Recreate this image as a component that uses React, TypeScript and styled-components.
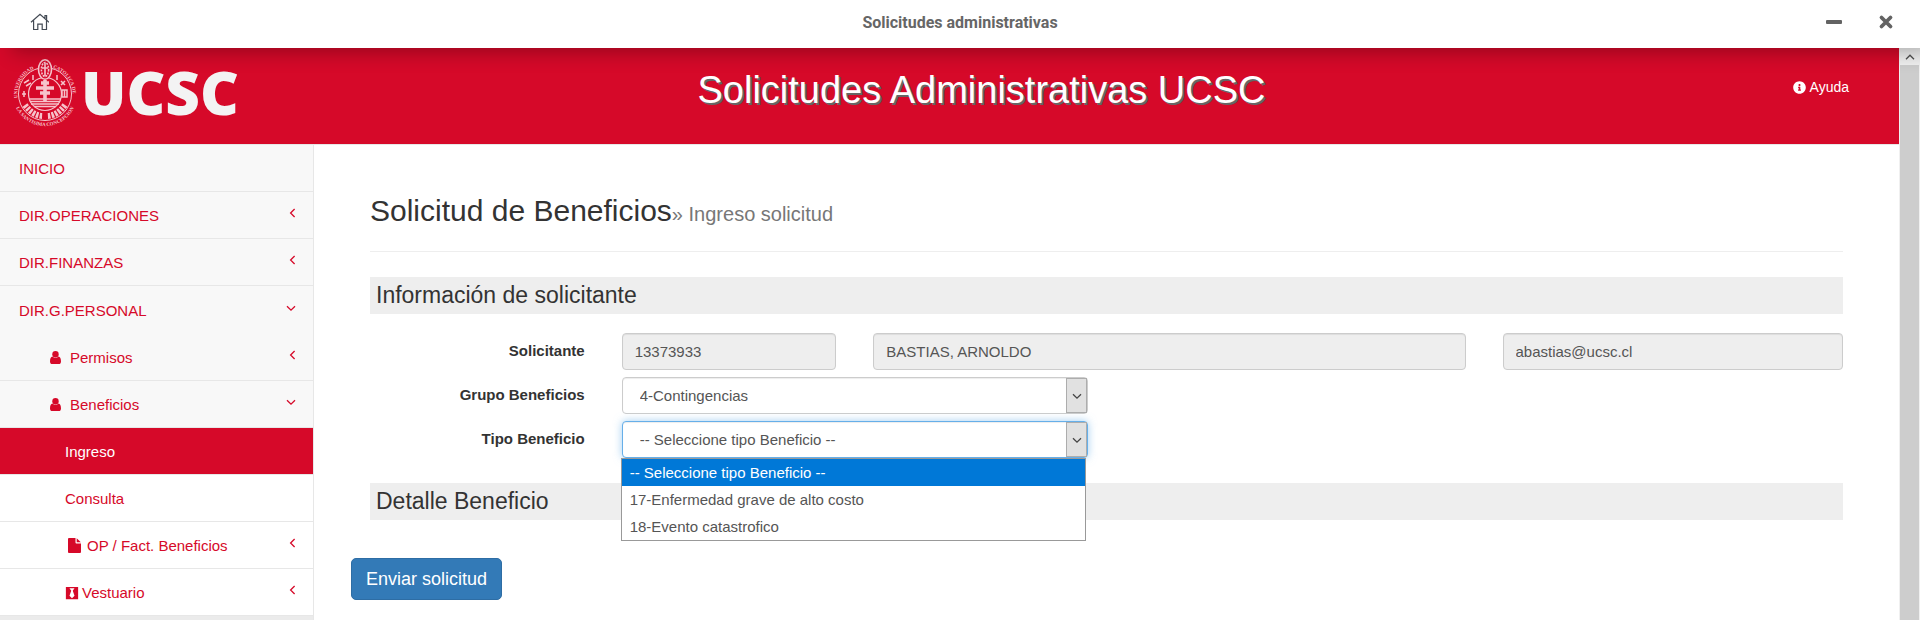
import React from "react";
import styled, { createGlobalStyle, css } from "styled-components";
import { FaBlackTie, FaInfoCircle } from "react-icons/fa";

const brand = "#d60929";
const line = "#e7e7e7";

const GlobalStyle = createGlobalStyle`
  *, *::before, *::after { box-sizing: border-box; }
  body {
    margin: 0;
    background: #fff;
    color: #333;
    font: 15px/21px "Liberation Sans", Arial, sans-serif;
  }
  h1, h2, ul { margin: 0; padding: 0; font-weight: 400; }
  ul { list-style: none; }
  a { color: inherit; text-decoration: none; }
  button, input, select { font: inherit; }
`;

const Window = styled.div`
  display: flex;
  flex-direction: column;
  height: 100vh;
  overflow: hidden;
`;

const TitleBar = styled.div`
  position: relative;
  z-index: 2;
  flex: none;
  display: grid;
  grid-template-columns: 1fr auto 1fr;
  align-items: center;
  height: 48px;
  padding: 0 24px 4px;
  background: #fff;
  box-shadow: 12px 4px 20px rgba(0, 0, 0, 0.3);
`;

const WindowTitle = styled.div`
  padding-top: 2px;
  color: #666;
  font: 700 16px/20px Roboto, sans-serif;
`;

const WindowButtons = styled.div`
  display: flex;
  justify-content: flex-end;
  gap: 32px;
`;

const IconButton = styled.button`
  display: flex;
  justify-self: start;
  padding: 0;
  border: 0;
  background: none;
  color: #636363;
`;

const Viewport = styled.div`
  flex: 1;
  display: flex;
  min-height: 0;
`;

const Page = styled.div`
  flex: 1;
  min-width: 0;
  display: flex;
  flex-direction: column;
  overflow: hidden;
`;

const Header = styled.header`
  flex: none;
  display: grid;
  grid-template-columns: 316px 1fr 252px;
  height: 97px;
  background: ${brand};
  border-bottom: 1px solid ${line};
  color: #fff;
`;

const Logo = styled.a`
  display: block;
  padding-left: 12px;
`;

const HeaderTitle = styled.div`
  padding-top: 20px;
  text-align: center;
  font-size: 38px;
  line-height: 44px;
  white-space: nowrap;
  text-shadow: 2px 2px 0 #666;
`;

const HelpLink = styled.a`
  display: flex;
  align-items: center;
  justify-content: flex-end;
  gap: 4px;
  height: 21px;
  margin: 29px 50px 0 0;
  font-size: 14px;
`;

const Body = styled.div`
  flex: 1;
  display: flex;
`;

const Sidebar = styled.nav`
  flex: none;
  align-self: stretch;
  width: 314px;
  border-right: 1px solid ${line};
`;

const Menu = styled.ul`
  border-bottom: 4px solid #ebebeb;
`;

type Level = 1 | 2 | 3;
const indents = { 1: 19, 2: 50, 3: 65 };

const MenuLink = styled.a<{ $level: Level; $active?: boolean; $heading?: boolean }>`
  display: flex;
  align-items: center;
  height: 47px;
  padding: 1px 17px 0 ${(p) => indents[p.$level]}px;
  border-bottom: 1px solid ${line};
  background: ${(p) => (p.$level === 3 ? "#fff" : "#f8f8f8")};
  color: ${brand};
  ${(p) => p.$heading && css`
    height: 48px;
    border-bottom: 0;
  `}
  ${(p) => p.$active && css`
    background: ${brand};
    color: #fff;
  `}
`;

const MenuIcon = styled.span<{ $gap: number }>`
  display: flex;
  margin-right: ${(p) => p.$gap}px;
`;

const MenuArrow = styled.span`
  display: flex;
  margin: 0 0 6px auto;
`;

const Main = styled.main`
  flex: 1;
  min-width: 0;
  padding: 49px 37px 0;
`;

const Content = styled.div`
  padding: 0 19px;
`;

const PageTitle = styled.h1`
  padding-bottom: 24px;
  margin-bottom: 25px;
  border-bottom: 1px solid #eee;
  font-size: 30px;
  line-height: 33px;

  small {
    color: #777;
    font-size: 20px;
    line-height: 20px;
  }
`;

const SectionTitle = styled.h2`
  padding: 0 6px;
  background: #eee;
  font-size: 23px;
  line-height: 37px;
`;

const FormGrid = styled.div`
  display: grid;
  grid-template-columns: repeat(12, minmax(0, 1fr));
  column-gap: 37px;
  row-gap: 7px;
  margin: 19px 0 25px;
`;

const Label = styled.label`
  grid-column: 1 / span 2;
  padding-top: 7px;
  text-align: right;
  font-weight: 700;
`;

const field = css`
  width: 100%;
  height: 37px;
  border: 1px solid #ccc;
  border-radius: 4px;
  box-shadow: inset 0 1px 1px rgba(0, 0, 0, 0.075);
  color: #555;
  outline: 0;
`;

const TextField = styled.input<{ $span: number }>`
  ${field}
  grid-column: span ${(p) => p.$span};
  padding: 0 12px;
  background: #eee;
`;

const SelectBox = styled.div`
  position: relative;
  grid-column: span 4;
`;

const Select = styled.select<{ $focused?: boolean }>`
  ${field}
  display: block;
  appearance: none;
  padding: 0 30px 0 17px;
  background: #fff;
  ${(p) => p.$focused && css`
    border-color: #66afe9;
    box-shadow: inset 0 1px 1px rgba(0, 0, 0, 0.075), 0 0 8px rgba(102, 175, 233, 0.6);
  `}
`;

const SelectArrow = styled.span`
  position: absolute;
  top: 1px;
  right: 1px;
  bottom: 1px;
  display: flex;
  align-items: center;
  justify-content: center;
  width: 21px;
  border: 1px solid #adadad;
  background: #e1e1e1;
  pointer-events: none;
`;

const Options = styled.ul`
  position: absolute;
  z-index: 1;
  top: 100%;
  left: -1px;
  right: 2px;
  border: 1px solid #999;
  background: #fff;
  color: #555;
`;

const Option = styled.li<{ $selected?: boolean }>`
  padding: 0 8px;
  line-height: 27px;
  ${(p) => p.$selected && css`
    background: #0078d7;
    color: #fff;
  `}
`;

const SubmitButton = styled.button`
  margin-top: 38px;
  height: 42px;
  padding: 0 14px;
  border: 1px solid #2e6da4;
  border-radius: 5px;
  background: #337ab7;
  color: #fff;
  font-size: 18px;
  line-height: 38px;
`;

const Scrollbar = styled.div`
  flex: none;
  width: 21px;
  padding: 0 1px;
  display: flex;
  flex-direction: column;
  background: #f0f0f0;
`;

const ScrollUp = styled.button`
  display: flex;
  align-items: center;
  justify-content: center;
  height: 17px;
  padding: 0;
  border: 0;
  background: #f0f0f0;
`;

const ScrollThumb = styled.div`
  flex: 1;
  background: #cdcdcd;
`;

const HomeIcon = () => (
  <svg width="25" height="18" viewBox="-6 0 25 18" fill="none" stroke="#434a54" strokeWidth="1.2">
    <path d="M1 9.3 10 1.3l9 8M3.6 7.4v9.1h4.2v-5.4h4.4v5.4h4.3V7.4M15 5.7V2.6h1.6v4.5" />
  </svg>
);

const Chevron = ({ dir, color = brand }: { dir: "left" | "down" | "up"; color?: string }) => {
  const d = {
    left: "M8.6 1 4.6 5l4 4",
    down: "M1 3.2 5 7.2l4-4",
    up: "M1 7.2 5 3.2l4 4",
  }[dir];
  return (
    <svg width="10" height="10" viewBox="0 0 10 10" fill="none" stroke={color} strokeWidth="1.3">
      <path d={d} />
    </svg>
  );
};

const UserIcon = () => (
  <svg width="11" height="13" viewBox="0 0 11 13" fill={brand}>
    <circle cx="5.5" cy="3.2" r="3.2" />
    <path d="M2.5 5.5 C0.8 5.6 0 7.5 0 10.4 C0 12 0.9 13 2.2 13 L8.800 13 C10.100 13 11 12 11 10.400 C11 7.500 10.200 5.600 8.500 5.500 C7 7.300 4 7.300 2.500 5.500 Z" />
  </svg>
);

const FileIcon = () => (
  <svg width="16" height="15" viewBox="-3 0 16 15" fill={brand}>
    <path d="M0 1 Q0 0 1 0 H7.500 V4.500 Q7.500 5.400 8.400 5.400 H13 V14 Q13 15 12 15 H1 Q0 15 0 14 Z M8.700 0.200 L12.800 4.300 H8.700 Z" />
  </svg>
);

const UcscLogo = () => (
  <svg width="226" height="90" viewBox="12 48 226 90" role="img" aria-label="UCSC">
    <defs>
      <path id="crest-left" d="M17.500 98A28 28 0 0 1 37 68" />
      <path id="crest-right" d="M53 68A28 28 0 0 1 72.500 99" />
      <path id="crest-bottom" d="M14 102A32 32 0 0 0 76 102" />
    </defs>
    <g fill="none" stroke="#f6c3cb">
      <circle cx="45" cy="94" r="26.500" strokeWidth="1" />
      <circle cx="45" cy="94" r="16.500" strokeWidth="1.200" />
      <ellipse cx="45" cy="69.500" rx="6.500" ry="9.800" strokeWidth="1.600" fill={brand} />
      <ellipse cx="45" cy="69.500" rx="3.600" ry="7" strokeWidth="1.600" strokeDasharray="2 1" />
      <path d="M45 63v13M42 68h6" strokeWidth="1.600" />
      <path d="M45 80v22M36 88h18M41 83h8M40 93h10" strokeWidth="3.600" />
      <path d="M29 99h32M30 101.500h30M31 104h28M34 106.500h22" strokeWidth="1.500" />
      <path d="M25 105q8 11 18 11M65 105q-8 11-18 11" strokeWidth="6" strokeDasharray="2.500 1.200" />
      <path d="M24 83l5-3M26 86l5-3M33 75v5M57 75v5M61 81l4 4M65 81l-4 4M22 94h4M24 91v6M62 90h5v7h-5zM64.500 90v7" strokeWidth="1.500" />
    </g>
    <g fill="#f6c3cb" fontFamily="Liberation Serif, serif" fontWeight="700" fontSize="5">
      <text><textPath href="#crest-left">UNIVERSIDAD</textPath></text>
      <text><textPath href="#crest-right">CATOLICA DE</textPath></text>
      <text><textPath href="#crest-bottom" startOffset="50%" textAnchor="middle">LA SANTISIMA CONCEPCION</textPath></text>
    </g>
    <text x="81" y="115" fill="#f3f3f3" fontFamily="Open Sans, sans-serif" fontWeight="800" fontSize="60">UCSC</text>
  </svg>
);

type Item = {
  text: string;
  level: Level;
  arrow?: "left" | "down";
  icon?: React.ReactNode;
  gap?: number;
  active?: boolean;
  heading?: boolean;
};

const items: Item[] = [
  { text: "INICIO", level: 1 },
  { text: "DIR.OPERACIONES", level: 1, arrow: "left" },
  { text: "DIR.FINANZAS", level: 1, arrow: "left" },
  { text: "DIR.G.PERSONAL", level: 1, arrow: "down", heading: true },
  { text: "Permisos", level: 2, arrow: "left", icon: <UserIcon />, gap: 9 },
  { text: "Beneficios", level: 2, arrow: "down", icon: <UserIcon />, gap: 9 },
  { text: "Ingreso", level: 3, active: true },
  { text: "Consulta", level: 3 },
  { text: "OP / Fact. Beneficios", level: 3, arrow: "left", icon: <FileIcon />, gap: 6 },
  { text: "Vestuario", level: 3, arrow: "left", icon: <FaBlackTie size={14} />, gap: 3 },
];

export default function App() {
  return (
    <Window>
      <GlobalStyle />
      <TitleBar>
        <IconButton aria-label="Inicio"><HomeIcon /></IconButton>
        <WindowTitle>Solicitudes administrativas</WindowTitle>
        <WindowButtons>
          <IconButton aria-label="Minimizar">
            <svg width="20" height="16" viewBox="0 0 20 16"><rect x="2" y="6" width="16" height="4" rx="1" fill="currentColor" /></svg>
          </IconButton>
          <IconButton aria-label="Cerrar">
            <svg width="20" height="16" viewBox="0 0 20 16" stroke="currentColor" strokeWidth="3.800" strokeLinecap="round">
              <path d="M5.500 3.500l9 9M14.500 3.500l-9 9" />
            </svg>
          </IconButton>
        </WindowButtons>
      </TitleBar>
      <Viewport>
        <Page>
          <Header>
            <Logo href="#"><UcscLogo /></Logo>
            <HeaderTitle>Solicitudes Administrativas UCSC</HeaderTitle>
            <HelpLink href="#"><FaInfoCircle size={13} />Ayuda</HelpLink>
          </Header>
          <Body>
            <Sidebar>
              <Menu>
                {items.map((item) => (
                  <li key={item.text}>
                    <MenuLink href="#" $level={item.level} $active={item.active} $heading={item.heading}>
                      {item.icon && <MenuIcon $gap={item.gap ?? 0}>{item.icon}</MenuIcon>}
                      {item.text}
                      {item.arrow && <MenuArrow><Chevron dir={item.arrow} /></MenuArrow>}
                    </MenuLink>
                  </li>
                ))}
              </Menu>
            </Sidebar>
            <Main>
              <Content>
                <PageTitle>Solicitud de Beneficios<small>» Ingreso solicitud</small></PageTitle>
                <SectionTitle>Información de solicitante</SectionTitle>
                <FormGrid>
                  <Label htmlFor="rut">Solicitante</Label>
                  <TextField id="rut" $span={2} readOnly defaultValue="13373933" />
                  <TextField aria-label="Nombre" $span={5} readOnly defaultValue="BASTIAS, ARNOLDO" />
                  <TextField aria-label="Correo" $span={3} readOnly defaultValue="abastias@ucsc.cl" />

                  <Label htmlFor="grupo">Grupo Beneficios</Label>
                  <SelectBox>
                    <Select id="grupo"><option>4-Contingencias</option></Select>
                    <SelectArrow><Chevron dir="down" color="#444" /></SelectArrow>
                  </SelectBox>

                  <Label htmlFor="tipo">Tipo Beneficio</Label>
                  <SelectBox>
                    <Select id="tipo" $focused>
                      <option>-- Seleccione tipo Beneficio --</option>
                      <option>17-Enfermedad grave de alto costo</option>
                      <option>18-Evento catastrofico</option>
                    </Select>
                    <SelectArrow><Chevron dir="down" color="#444" /></SelectArrow>
                    <Options role="listbox" aria-label="Tipo Beneficio">
                      <Option role="option" aria-selected $selected>-- Seleccione tipo Beneficio --</Option>
                      <Option role="option">17-Enfermedad grave de alto costo</Option>
                      <Option role="option">18-Evento catastrofico</Option>
                    </Options>
                  </SelectBox>
                </FormGrid>
                <SectionTitle>Detalle Beneficio</SectionTitle>
              </Content>
              <SubmitButton type="button">Enviar solicitud</SubmitButton>
            </Main>
          </Body>
        </Page>
        <Scrollbar>
          <ScrollUp aria-label="Subir"><Chevron dir="up" color="#505050" /></ScrollUp>
          <ScrollThumb />
        </Scrollbar>
      </Viewport>
    </Window>
  );
}
